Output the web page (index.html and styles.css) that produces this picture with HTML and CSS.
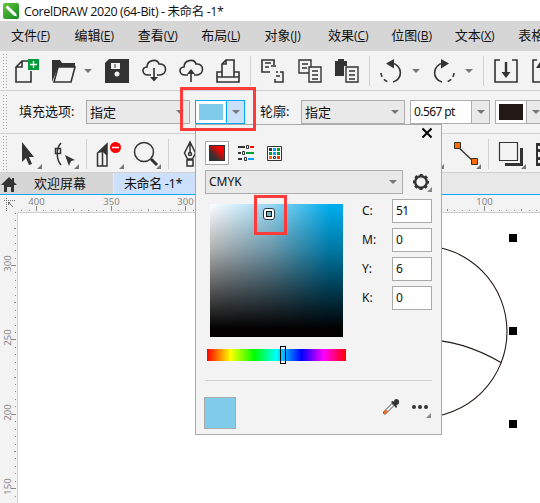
FILE: index.html
```html
<!DOCTYPE html>
<html lang="zh-CN">
<head>
<meta charset="utf-8">
<title>CorelDRAW 2020</title>
<link rel="stylesheet" href="styles.css">
</head>
<body>
<div class="app">
  <header class="title">
    <svg class="logo" width="16" height="16" viewBox="0 0 16 16"><defs><linearGradient id="lg" x2="1" y2="1"><stop stop-color="#65c63e"/><stop offset="1" stop-color="#11881f"/></linearGradient></defs><rect width="16" height="16" rx="2" fill="url(#lg)"/><path d="M2.500 4.500 4.500 2.500 13 10.500 14 13.500 10.500 12.500z" fill="#fff"/></svg>
    <span class="title-text">CorelDRAW 2020 (64-Bit) - 未命名 -1*</span>
  </header>
  <nav class="menu">
    <span>文件<i>(<u>F</u>)</i></span><span>编辑<i>(<u>E</u>)</i></span><span>查看<i>(<u>V</u>)</i></span><span>布局<i>(<u>L</u>)</i></span><span>对象<i>(<u>J</u>)</i></span><span>效果<i>(<u>C</u>)</i></span><span>位图<i>(<u>B</u>)</i></span><span>文本<i>(<u>X</u>)</i></span><span>表格</span>
  </nav>
  <div class="bar standard">
    <div class="grip"></div>
    <svg class="strip" width="532" height="39" viewBox="8 51 532 39" fill="none" stroke="#333" stroke-width="1.600">
      <path d="M28 61h-6l-6 6v15h15V71M22 61v6h-6"/><rect x="28" y="59" width="11" height="11" fill="#009b3a" stroke="none"/><path d="M33.500 61v7M30 64.500h7" stroke="#fff" stroke-width="1.300"/>
      <path d="M52 82V60h8l2 3h13v4H58z" fill="#333" stroke="none"/><path d="M58 67h17l-4 15H54z" fill="#f3f3f3"/>
      <path class="arrow" d="M84 69h8l-4 4z"/>
      <path d="M105 63l4-4h20v24h-24z" fill="#333" stroke="none"/><path d="M111 63h9v6h-9z" fill="#f3f3f3" stroke="none"/><path d="M115 64v4" stroke-width="1"/><circle cx="117" cy="74" r="2.500" fill="#f3f3f3" stroke="none"/>
      <path d="M151 75h-3c-6 0-7-8-1-8 0-7 10-9 12-3 8-1 9 10 1 11h-3"/><path d="M154 68v10"/><path d="M150 77h8l-4 4.500z" fill="#333" stroke="none"/>
      <path d="M188 75h-3c-6 0-7-8-1-8 0-7 10-9 12-3 8-1 9 10 1 11h-3"/><path d="M191 73v9"/><path d="M187 74h8l-4-5z" fill="#333" stroke="none"/>
      <path d="M222 72h-5v10h22V72h-5M217 77h22M222 77V64l4-4h8v17M226 60v4h-4"/>
      <path class="sep" d="M250.500 56v30M369.500 56v30M483.500 56v30"/>
      <path d="M270 72h-8V60h12v5M265 63h6M265 67h4"/><path d="M271 66h5M276 76h4M276 72h2M280 72h3v10h-8v-3" stroke-width="1.500"/>
      <path d="M309 73h-10V60h12v7M302 64h6M302 68h5" stroke-width="1.400"/><path d="M309 67h12v15h-12zM312 71h6M312 75h6M312 79h6" stroke-width="1.400"/>
      <path d="M335 61h3v-2h6v2h3v5h-3v10h-9z" fill="#333" stroke="none"/><path d="M346 67h12v15h-12zM349 71h6M349 75h6M349 79h6" stroke-width="1.400"/>
      <path d="M392 63.300a9.500 9.500 0 0 1 1 18.700"/><path d="M394 59l-8 4.500 8 5z" fill="#333" stroke="none"/><path d="M381 73a10 10 0 0 0 8 9" stroke-dasharray="4 3"/>
      <path class="arrow" d="M412 69h8l-4 4z"/><path d="M443 63.300a9.500 9.500 0 0 0-1 18.700"/><path d="M441 59l8 4.500-8 5z" fill="#333" stroke="none"/><path d="M454 73a10 10 0 0 1-8 9" stroke-dasharray="4 3"/><path class="arrow" d="M465 69h8l-4 4z"/>
      <path d="M500 60h-5v22h22V60h-5M537 60h-4v22h8"/><path d="M506 62v11" stroke-width="2.400"/><path d="M501.500 72h9l-4.500 6zM536 68h4v-6z" fill="#333" stroke="none"/>
    </svg>
  </div>
  <div class="bar property">
    <div class="grip"></div>
    <span class="fill-label">填充选项:</span>
    <div class="combo fill-type"><span>指定</span><b></b></div>
    <div class="combo color active"><em></em><b></b></div>
    <span class="outline-label">轮廓:</span>
    <div class="combo outline-type"><span>指定</span><b></b></div>
    <div class="combo width"><span>0.567 pt</span><b></b></div>
    <div class="combo color ink"><em></em><b></b></div>
  </div>
  <div class="bar tools">
    <div class="grip"></div>
    <svg class="strip" width="532" height="38" viewBox="8 134 532 38" fill="none" stroke="#333" stroke-width="1.500">
      <path d="M22 142v20l4-4 3 7 3-1-3-7h5z" fill="#333" stroke="none"/>
      <path d="M61 143c-5 5-5 16 0 22M55.500 148.500h5v5h-5z"/><path d="M65 155l10 5-4 1-2 5z" fill="#333" stroke="none"/>
      <path class="sep" d="M86.500 139v30M168.500 139v30M488.500 139v30"/>
      <path d="M97.500 166v-13l9.500-9v22zM102.500 166v-15"/><path d="M98 153l9-9v12l-4-4z" fill="#333" stroke="none"/><circle cx="115.500" cy="147.500" r="5.500" fill="red" stroke="none"/><path d="M112 147.500h7" stroke="#fff"/>
      <circle cx="144" cy="152" r="9.500"/><path d="M151 159l6 6" stroke-width="3"/>
      <path d="M190 142l-5.500 11 3 6h5l3-6zM190 142v10M187 160h6v6h-6z"/><circle cx="190" cy="154" r="1.500"/>
      <path class="corner" d="M42 164v5h-5zM79 164v5h-5zM124 164v5h-5zM161 164v5h-5zM444 164v5h-5zM481 164v5h-5zM526 164v5h-5z"/>
      <path d="M457 146l17 16" stroke-width="1.300"/><path d="M454.500 142.500h6v6h-6zM471.500 158.500h6v6h-6z" fill="#ff6b00" stroke-width="1"/>
      <path d="M521.500 148v16.500h-16.500" stroke-width="3"/><path d="M499.500 142.500h18v18h-18z" fill="#f3f3f3" stroke-width="1.200"/><path d="M536 143h4v23h-4z" fill="#333" stroke="none"/><path d="M538 146h2v3h-2zM538 152h2v5h-2zM538 160h2v3h-2z" fill="#f3f3f3" stroke="none"/>
    </svg>
  </div>
  <div class="tabs">
    <div class="tab welcome"><svg width="18" height="18" viewBox="0 0 18 18"><path d="M1 10 9 2l3 3V3h2v4l3 3h-3v7h-3v-5H7v5H4v-7z" fill="#333"/></svg><span>欢迎屏幕</span></div>
    <div class="tab document"><span>未命名 -1*</span></div>
  </div>
  <main class="workspace">
    <svg class="origin" width="17" height="17" viewBox="0 0 17 17" fill="none" stroke="#777"><path d="M6.500 3v13M4 5.500h11" stroke-dasharray="1 1"/><path d="M8 7l5 5M10 7.500H8.500V10"/></svg>
    <svg id="hr" class="ruler-h" width="522" height="18"></svg>
    <svg id="vr" class="ruler-v" width="18" height="290"></svg>
    <svg class="canvas" width="522" height="290" viewBox="18 213 522 290"><g fill="none" stroke="#231815" stroke-width="1.100"><circle cx="421" cy="331.500" r="86"/><path d="M340 363Q421 316 501 362.500"/></g><path d="M509 234h8v8h-8zM509 327h8v8h-8zM509 420h8v8h-8z"/></svg>
  </main>
</div>
<section class="picker">
  <button class="close"><svg width="12" height="12" viewBox="0 0 12 12"><path d="M1.500 1.500 10.500 10.500M10.500 1.500 1.500 10.500" stroke="#000" stroke-width="2"/></svg></button>
  <div class="modes">
    <div class="mode selected"><i></i></div>
    <svg width="16" height="16" viewBox="0 0 16 16"><g stroke-width="2"><path d="M0 2h7M0 8h3M0 14h4" stroke="#333"/><path d="M12 2h4" stroke="red"/><path d="M8 8h8" stroke="#009b3a"/><path d="M10 14h6" stroke="#00a2ff"/></g><g fill="none" stroke="#333"><path d="M8.500.500h2v3h-2zM4.500 6.500h2v3h-2zM6.500 12.500h2v3h-2z"/></g></svg>
    <svg width="15" height="15" viewBox="0 0 15 15"><path d="M.500.500h14v14H.500z" fill="#fff" stroke="#333"/><path d="M2 2h3v3H2z" fill="#333"/><path d="M6 2h3v3H6zM6 6h3v3H6z" fill="#00a2ff"/><path d="M10 2h3v3h-3zM2 6h3v3H2zM10 6h3v3h-3z" fill="#009b3a"/><path d="M2 10h3v3H2z" fill="#ff6b00"/><path d="M6.500 10.500h2v2h-2z" fill="#fff" stroke="#333"/><path d="M10 10h3v3h-3z" fill="#f30"/></svg>
  </div>
  <div class="model-row"><div class="combo model"><span>CMYK</span><b></b></div><svg width="20" height="20" viewBox="0 0 20 20"><circle cx="8" cy="10" r="5.800" fill="none" stroke="#333" stroke-width="2.400"/><circle cx="8" cy="10" r="7" fill="none" stroke="#333" stroke-width="2.200" stroke-dasharray="2.900 2.600" stroke-dashoffset="1.450"/><path d="M19 15v5h-5z" fill="#888"/></svg></div>
  <div class="values">
    <div class="field"></div>
    <div class="channels"><label>C:</label><span>51</span><label>M:</label><span>0</span><label>Y:</label><span>6</span><label>K:</label><span>0</span></div>
  </div>
  <div class="hue"></div>
  <div class="result"><div class="sample"></div><svg class="dropper" width="18" height="18" viewBox="0 0 18 18"><path d="M1.500 15.500V14L10 5.500 12 7.500 3.500 16H2z" fill="#fff" stroke="#444"/><path d="M1.500 16v-2L4 11.500 6 13.500 3.500 16z" fill="#e86a20"/><path d="M9 4l1.500-1L12 3.500c0-4 6-3 5 1 0 2-1 2-2.500 2.500L15 9l-1 1z" fill="#333"/></svg><svg width="20" height="18" viewBox="0 0 20 18"><g fill="#333"><circle cx="2" cy="6" r="2"/><circle cx="8" cy="6" r="2"/><circle cx="14" cy="6" r="2"/></g><path d="M19 12v5h-5z" fill="#888"/></svg></div>
  <div class="target"></div>
  <div class="hue-thumb"></div>
</section>
<div class="mark mark-color"></div>
<div class="mark mark-target"></div>
<script src="rulers.js"></script>
</body>
</html>
```
FILE: styles.css
```css
*,*::before,*::after{box-sizing:border-box}
body{margin:0;width:540px;height:503px;overflow:hidden;position:relative;background:#fff;color:#111;font:13px "Noto Sans","Noto Sans CJK SC",sans-serif}
svg{display:block;flex:none}
i{font-style:normal}
.app{display:flex;flex-direction:column;height:503px;overflow:hidden}
.title{height:21px;display:flex;align-items:center;padding-left:3px;gap:5px;font:12.5px "Open Sans","Noto Sans CJK SC",sans-serif;white-space:nowrap;letter-spacing:-.4px}
.title-text{padding-bottom:1px}
.menu{height:30px;background:#d6d6d6;display:grid;grid-template-columns:repeat(9,63.400px);align-items:center;padding:0 0 3px 11px;font-family:"Noto Sans CJK SC",sans-serif;white-space:nowrap;overflow:hidden}
.menu i{font:12px "Open Sans",sans-serif;letter-spacing:-.1px}
.menu u{text-underline-offset:1px}
.bar{display:flex;align-items:center;background:#f3f3f3;border-bottom:1px solid #d0d0d0;flex:none}
.standard{height:40px}
.property{height:43px;overflow:hidden;white-space:nowrap}
.tools{height:39px}
.grip{width:6px;height:36px;margin:0 0 0 2px;background:radial-gradient(circle,#aaa .7px,transparent .8px) 0 0/3px 3px;flex:none}
.sep{stroke:#d0d0d0;stroke-width:1}
.arrow,.corner{fill:#777;stroke:none}
.fill-label{flex:none;width:67px;margin-left:11px;padding-bottom:3px}
.combo{height:24px;border:1px solid #adadad;background:#e9e9e9;display:flex;align-items:center;justify-content:space-between;padding-left:3px;flex:none}
.combo span{padding-bottom:2px}
.combo b{width:18px;height:22px;display:grid;place-items:center;flex:none}
.combo b::after{content:"";width:8px;height:4px;border:4px solid transparent;border-top-color:#777;border-bottom:0}
.fill-type{width:104px}
.color{width:50px;margin-left:5px;padding:0;background:#fff}
.color em{width:24px;height:16px;margin-left:3px;background:#7ecce9}
.color.active{border-color:#00a8f3}
.color.active b{background:#cce0fb;border-left:1px solid #00a8f3}
.outline-label{flex:none;margin-left:15px;width:41px;padding-bottom:3px}
.outline-type{width:104px}
.width{width:80px;margin-left:5px;background:#fff;font-size:12px}
.width span{letter-spacing:-.6px}
.width b,.ink b{background:#e9e9e9;border-left:1px solid #adadad}
.ink em{background:#231815}
.tabs{height:22px;background:#e8e8e8;border-bottom:1px solid #00a8f3;display:flex;flex:none}
.tab{display:flex;align-items:center}
.tab span{padding-bottom:3px}
.welcome{width:114px;background:#d6d6d6;gap:16px;border-right:1px solid #e8e8e8}
.document{width:95px;background:#cce0fb;padding-left:10px;letter-spacing:-.4px}
.workspace{display:grid;grid-template:18px 290px/18px 522px;background:#f3f3f3}
.canvas{background:#fff}
.ruler-h,.ruler-v{fill:#888;font:9.5px "Noto Sans",sans-serif}
.picker{position:absolute;left:195px;top:124px;width:247px;height:311px;border:1px solid #aaa;background:#f3f3f3;display:flex;flex-direction:column;padding-left:9px}
.close{border:0;background:none;padding:2px 2px;height:16px;margin:0 6px 0 auto}
.modes{height:24px;display:flex;align-items:center;gap:17px}
.modes svg:nth-child(2){margin-right:-4px;margin-left:-8px}
.mode{width:24px;height:24px;border:1px solid #aaa;background:#fff;padding:3px}
.mode i{display:block;width:16px;height:16px;border:1px solid #333;background:linear-gradient(45deg,#333 25%,red 75%)}
.model-row{display:flex;margin-top:5px;gap:10px;align-items:center}
.model{width:198px;font-size:12px}
.values{display:flex;margin:10px 0 0 5px;height:133px}
.field{width:133px;height:133px;background:linear-gradient(to bottom,transparent,rgba(0,0,0,.32) 35%,rgba(0,0,0,.7) 68%,#020000 94%),linear-gradient(90deg,#fff,#9bd8f2 45%,#00aeef 90%)}
.channels{display:grid;grid-template-columns:30px 40px;grid-auto-rows:24px;gap:5px 0;margin:-5px 0 0 19px;font-size:12px;align-items:center}
.channels label{padding-bottom:1px}
.channels span{height:24px;border:1px solid #aaa;background:#fff;padding:3px;line-height:15px;letter-spacing:-.5px}
.hue{width:139px;height:12px;margin:12px 0 0 2px;background:linear-gradient(90deg,red,#ff0 17%,#0f0 34%,#0ff 50%,#00f 68%,#f0f 84%,red)}
.result{width:227px;height:51px;margin-top:19px;border-top:1px solid #d0d0d0;display:flex;align-items:center;padding-top:8px}
.sample{width:32px;height:32px;border:1px solid #aaa;background:#7ecce9;margin:6px auto 0 -1px}
.dropper{margin:-6px 12px 0 0}
.target{position:absolute;left:67px;top:83px;width:12px;height:12px;border:1px solid #263b44;border-radius:3px;background:#fff;padding:2px}
.target::after{content:"";display:block;width:6px;height:6px;border:1px solid #111;background:#75b2c8}
.hue-thumb{position:absolute;left:84px;top:221px;width:6px;height:18px;border:1px solid #000}
.mark{position:absolute;border:3px solid #fc3b3b}
.mark-color{left:180px;top:87px;width:76px;height:44px}
.mark-target{left:254px;top:195px;width:33px;height:40px}
```
FILE: rulers.js
```js
const horizontal = document.getElementById('hr');
const vertical = document.getElementById('vr');
let h = '<path d="M0 17h522v1H0z" fill="#d0d0d0"/>';
let v = '<path d="M17 0h1v290h-1z" fill="#d0d0d0"/>';
for (let i = -2; i < 70; i++) {
  const x = Math.round(18 + i * 7.467);
  // The open color picker covers this part of the ruler.
  if (x > 176 && x < 424) continue;
  const major = i % 10 === 0;
  const size = major ? 5 : i % 5 === 0 ? 2 : 1;
  h += `<path d="M${x} ${16 - size}h1v${size}h-1z"/>`;
  if (major) h += `<text x="${x + .5}" y="10" text-anchor="middle">${400 - i * 5}</text>`;
}
for (let i = -7; i < 33; i++) {
  const y = Math.round(52 + i * 7.44), major = i % 10 === 0;
  const size = major ? 5 : i % 5 === 0 ? 2 : 1;
  v += `<path d="M${16 - size} ${y}h${size}v1h-${size}z"/>`;
  if (major) v += `<text transform="translate(11 ${y - 1.500}) rotate(-90)" text-anchor="middle">${300 - i * 5}</text>`;
}
horizontal.innerHTML = h;
vertical.innerHTML = v;
```
